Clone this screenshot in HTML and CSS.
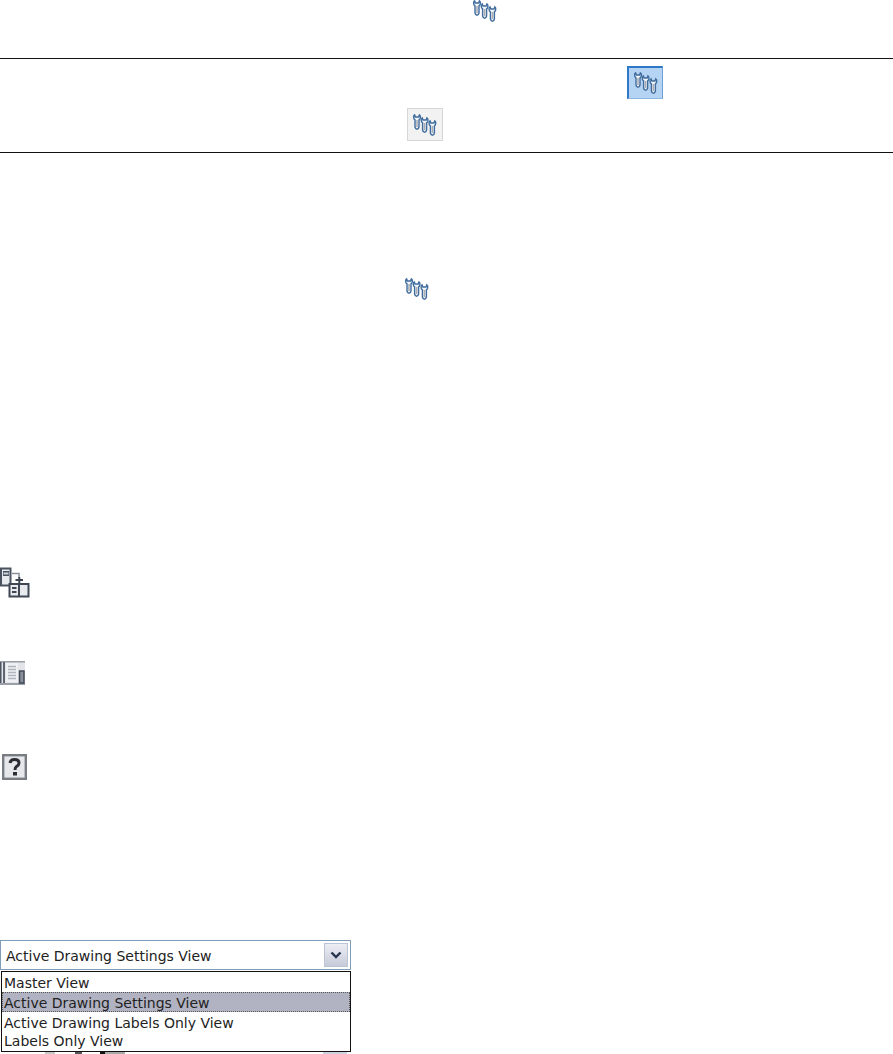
FILE: index.html
```html
<!DOCTYPE html>
<html lang="en">
<head>
<meta charset="utf-8">
<title>Drawing Settings</title>
<link rel="stylesheet" href="styles.css">
</head>
<body>
<svg class="defs" width="0" height="0" aria-hidden="true">
  <defs>
    <g id="wrench">
      <path class="wr-body" d="M1.600 .8 Q.3 1.500 .7 3.800 Q1 5.300 2 5.900 L2 13 Q2.500 15.200 4 15.200 Q5.500 15.200 6 13 L6 5.900 Q7 5.300 7.300 3.800 Q7.700 1.500 6.400 .8 L5.600 3 H2.400 Z"/>
      <path class="wr-shade" d="M4 6 V13"/>
    </g>
    <symbol id="wrenches" viewBox="0 0 24 22">
      <use href="#wrench" x="0" y="0"/>
      <use href="#wrench" x="7.600" y="3"/>
      <use href="#wrench" x="15.400" y="6"/>
    </symbol>
  </defs>
</svg>

<div class="lead"><svg class="wr"><use href="#wrenches"/></svg></div>

<section class="note">
  <div class="note-row-a"><span class="tool tool-on"><svg class="wr"><use href="#wrenches"/></svg></span></div>
  <div class="note-row-b"><span class="tool tool-off"><svg class="wr"><use href="#wrenches"/></svg></span></div>
</section>

<div class="inline-icon"><svg class="wr"><use href="#wrenches"/></svg></div>

<div class="icons">
  <svg class="ic-move" viewBox="0 0 30 31" width="30" height="31">
    <rect x="1" y="1.500" width="9.500" height="17" fill="#e8eaee" stroke="#4a5260" stroke-width="2"/>
    <rect x="3" y="4" width="6" height="5" fill="#4a5260"/>
    <rect x="3.500" y="5.500" width="5" height="2" fill="#cfd3da"/>
    <path d="M12 6.500H19V11" fill="none" stroke="#8b919b" stroke-width="1.500"/>
    <path d="M15.500 13H23M19.300 10V17" stroke="#3c4350" stroke-width="2"/>
    <rect x="9.500" y="17" width="19" height="12.500" fill="#e8eaee" stroke="#3f4755" stroke-width="2"/>
    <path d="M19 17V29.500" stroke="#3f4755" stroke-width="2"/>
    <path d="M12 21H16.500M12 25H16.500" stroke="#3f4755" stroke-width="2"/>
  </svg>
  <svg class="ic-sheet" viewBox="0 0 25 24" width="25" height="24">
    <rect x="0" y="0" width="25" height="24" fill="#e3e4e7"/>
    <rect x="0" y="0" width="25" height="1.500" fill="#9a9ea6"/>
    <rect x="0" y="22" width="25" height="2" fill="#9a9ea6"/>
    <rect x="0" y="1" width="1.500" height="21" fill="#4c5563"/>
    <rect x="3" y="1" width="2" height="21" fill="#5d6572"/>
    <rect x="6" y="2" width="12" height="19" fill="#eef0f3"/>
    <path d="M8 5.500H16M8 8.500H16M8 11.500H16M8 14.500H16M8 17.500H16" stroke="#b0b5bc" stroke-width="1.500"/>
    <rect x="19.500" y="10" width="4.500" height="12" fill="#8a8f99" stroke="#414a58" stroke-width="1.500"/>
  </svg>
  <svg class="ic-help" viewBox="0 0 25 26" width="25" height="26">
    <rect x="1.200" y="1.200" width="22.600" height="23.600" fill="#e6e7ea" stroke="#787d83" stroke-width="2.400"/>
    <path d="M8 9Q8.500 5.500 12.500 5.500Q17 5.500 17 9Q17 11 14.500 12.500Q13 13.500 13 16" fill="none" stroke="#2a2d33" stroke-width="3"/>
    <rect x="11" y="18" width="4" height="3.500" fill="#2a2d33"/>
  </svg>
</div>

<div class="combo">
  <span class="combo-value">Active Drawing Settings View</span>
  <span class="combo-btn"><svg viewBox="0 0 12 8" width="12" height="8"><path d="M1.500 1.500L6 6L10.500 1.500" fill="none" stroke="#26344f" stroke-width="2.400"/></svg></span>
</div>
<ul class="list">
  <li>Master View</li>
  <li class="selected">Active Drawing Settings View</li>
  <li>Active Drawing Labels Only View</li>
  <li>Labels Only View</li>
</ul>
<div class="under">
  <span class="chip chip-a"></span>
  <span class="chip chip-b"></span>
  <span class="chip chip-c"></span>
  <span class="chip chip-d"></span>
  <span class="chip chip-e"></span>
</div>
</body>
</html>
```

FILE: styles.css
```css
html, body {
  margin: 0;
  padding: 0;
  background: #fff;
}
body {
  height: 1054px;
  overflow: hidden;
  font-family: "DejaVu Sans", "Noto Sans", sans-serif;
  font-size: 14px;
  color: #222;
}
.defs {
  display: block;
  height: 0;
}
.wr-body {
  fill: #f2f4f7;
  stroke: #3f6c9e;
  stroke-width: 1.400;
}
.wr-shade {
  fill: none;
  stroke: #a9adb3;
  stroke-width: 1.500;
}
.wr {
  display: block;
  width: 24px;
  height: 22px;
}
.lead {
  height: 58px;
  padding-left: 473px;
  box-sizing: border-box;
}
.note {
  height: 95px;
  box-sizing: border-box;
  border-top: 1px solid #111;
  border-bottom: 1px solid #111;
  padding-top: 7px;
}
.note-row-a {
  padding-left: 627px;
}
.note-row-b {
  padding-left: 407px;
  padding-top: 9px;
}
.tool {
  display: flex;
  align-items: center;
  justify-content: center;
  width: 36px;
  height: 33px;
  box-sizing: border-box;
}
.tool-on {
  background: #b5d3f3;
  border: 1px solid #2f78c8;
  border-left-width: 2px;
  border-top-width: 2px;
  border-bottom-color: #8db6e2;
  border-right-color: #6f9fd6;
}
.tool-off {
  background: #f2f2f2;
  border: 1px solid #d6d6d6;
}
.inline-icon {
  padding-left: 405px;
  padding-top: 125px;
}
.icons {
  display: flex;
  flex-direction: column;
  align-items: flex-start;
  padding-top: 267px;
}
.ic-move {
  display: block;
}
.ic-sheet {
  display: block;
  margin-top: 63px;
}
.ic-help {
  display: block;
  margin-top: 69px;
  margin-left: 2px;
}
.combo {
  display: flex;
  align-items: center;
  justify-content: space-between;
  width: 351px;
  height: 30px;
  box-sizing: border-box;
  margin-top: 160px;
  border: 1px solid #7f9db9;
  padding-left: 5px;
  padding-right: 2px;
}
.combo-value {
  line-height: 20px;
  padding-top: 1px;
}
.combo-btn {
  display: flex;
  align-items: center;
  justify-content: center;
  width: 24px;
  height: 24px;
  box-sizing: border-box;
  background: linear-gradient(#eceef4, #c6cad8);
  border: 1px solid #bcc3d3;
}
.list {
  list-style: none;
  width: 350px;
  margin: 1px 0 0 1px;
  padding: 0;
  box-sizing: border-box;
  border: 1px solid #111;
}
.list li {
  height: 20px;
  line-height: 22px;
  padding-left: 2px;
  white-space: nowrap;
}
.list li:last-child {
  height: 19px;
  line-height: 19px;
}
.list .selected {
  background: #b1b3c2;
  outline: 1px dotted #555;
  outline-offset: -1px;
}
.under {
  display: flex;
  height: 2px;
}
.chip {
  display: block;
  height: 2px;
}
.chip-a {
  width: 10px;
  margin-left: 45px;
  background: #c8c8c8;
}
.chip-b {
  width: 7px;
  margin-left: 20px;
  background: #555;
}
.chip-c {
  width: 5px;
  margin-left: 18px;
  background: #111;
}
.chip-d {
  width: 20px;
  background: #aaa;
}
.chip-e {
  width: 24px;
  margin-left: 198px;
  background: #cdd3de;
}
```
